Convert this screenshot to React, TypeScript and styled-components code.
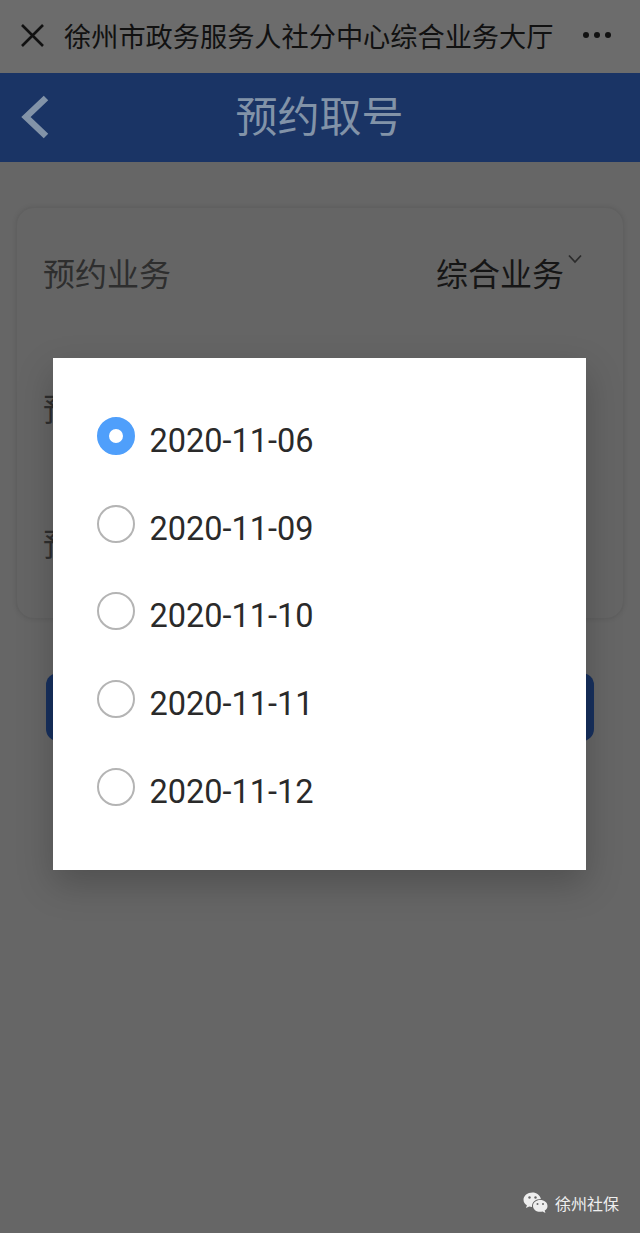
import React from "react";
import styled, { createGlobalStyle } from "styled-components";

const dates = ["2020-11-06", "2020-11-09", "2020-11-10", "2020-11-11", "2020-11-12"];

const GlobalStyle = createGlobalStyle`
  html, body {
    margin: 0;
    padding: 0;
    background: #666666;
  }
  * {
    box-sizing: border-box;
  }
`;

const Page = styled.div`
  position: relative;
  width: 640px;
  height: 1233px;
  overflow: hidden;
  background-color: #666666;
  font-family: "Noto Sans CJK SC", "Noto Sans", sans-serif;
`;

const TitleBar = styled.div`
  height: 73px;
  display: flex;
  align-items: center;
  padding: 0 28px 3px 20px;
  background-color: #6c6c6c;
`;

const TitleText = styled.div`
  flex: 1;
  margin-left: 19px;
  font-size: 27.2px;
  line-height: 36px;
  color: #111111;
  white-space: nowrap;
`;

const Header = styled.div`
  height: 89px;
  display: flex;
  align-items: center;
  position: relative;
  justify-content: center;
  padding-bottom: 8px;
  background-color: #1a3465;
`;

const BackIcon = styled.svg`
  position: absolute;
  left: 20px;
  top: 21px;
`;

const HeaderTitle = styled.div`
  font-size: 42px;
  line-height: 56px;
  color: #8293a8;
  margin-left: -1px;
`;

const Card = styled.div`
  margin: 45px 16px 0;
  height: 412px;
  padding: 0 41px 6px 26px;
  border: 1px solid #606060;
  border-radius: 18px;
  background-color: #656565;
  box-shadow: 0 0 5px rgba(0, 0, 0, 0.1);
`;

const CardRow = styled.div`
  height: 135px;
  display: flex;
  align-items: center;
  justify-content: space-between;
  padding-bottom: 8px;
`;

const RowLabel = styled.div`
  font-size: 32px;
  line-height: 42px;
  color: #2e2e2e;
`;

const RowValue = styled.div`
  display: flex;
  align-items: flex-start;
  font-size: 32px;
  line-height: 42px;
  color: #161616;
`;

const Chevron = styled.svg`
  margin: 3px 0 0 4px;
`;

const SubmitBar = styled.div`
  margin: 54px 46px 0;
  height: 68px;
  border-radius: 12px;
  background-color: #17305e;
`;

const Dialog = styled.div`
  position: absolute;
  left: 53px;
  top: 358px;
  width: 533px;
  height: 512px;
  padding: 34px 0 0 44px;
  background-color: #ffffff;
  box-shadow: 0 14px 34px rgba(0, 0, 0, 0.22);
`;

const DateRow = styled.div`
  height: 87.8px;
  display: flex;
  align-items: center;
  gap: 14.5px;
`;

const Radio = styled.div<{ $checked?: boolean }>`
  width: 38px;
  height: 38px;
  flex: none;
  border-radius: 50%;
  background-color: #ffffff;
  border: ${(p) => (p.$checked ? "12px solid #4f9ffb" : "2px solid #b4b4b4")};
`;

const DateText = styled.div`
  padding-top: 10px;
  font-family: Roboto, "Noto Sans", sans-serif;
  font-size: 32.5px;
  line-height: 42px;
  color: #2a2a2a;
`;

const Watermark = styled.div`
  position: absolute;
  left: 523px;
  top: 1190px;
  display: flex;
  align-items: center;
  gap: 7px;
  font-size: 16px;
  line-height: 26px;
  color: #eeeeee;
`;

export default function App() {
  return (
    <Page>
      <GlobalStyle />
      <TitleBar>
        <svg width="25" height="25" viewBox="0 0 25 25" fill="none">
          <path d="M2 2L23 23M23 2L2 23" stroke="#111" strokeWidth="2.6" />
        </svg>
        <TitleText>徐州市政务服务人社分中心综合业务大厅</TitleText>
        <svg width="30" height="8" viewBox="0 0 30 8" fill="#111">
          <circle cx="4" cy="4" r="3" />
          <circle cx="15" cy="4" r="3" />
          <circle cx="26" cy="4" r="3" />
        </svg>
      </TitleBar>
      <Header>
        <BackIcon width="32" height="46" viewBox="0 0 32 46" fill="none">
          <path d="M26 4L6 23L26 42" stroke="#8293a8" strokeWidth="6.5" />
        </BackIcon>
        <HeaderTitle>预约取号</HeaderTitle>
      </Header>
      <Card>
        <CardRow>
          <RowLabel>预约业务</RowLabel>
          <RowValue>
            综合业务
            <Chevron width="14" height="10" viewBox="0 0 14 10" fill="none">
              <path d="M1 1.5L7 8L13 1.5" stroke="#2c2c2c" strokeWidth="1.8" />
            </Chevron>
          </RowValue>
        </CardRow>
        <CardRow>
          <RowLabel>预约日期</RowLabel>
        </CardRow>
        <CardRow>
          <RowLabel>预约人</RowLabel>
        </CardRow>
      </Card>
      <SubmitBar />
      <Dialog>
        {dates.map((d, i) => (
          <DateRow key={d}>
            <Radio $checked={i === 0} />
            <DateText>{d}</DateText>
          </DateRow>
        ))}
      </Dialog>
      <Watermark>
        <svg width="25" height="22" viewBox="0 0 25 22" fill="#eeeeee">
          <path d="M9.5 0.5C4.5 0.5 0.5 3.7 0.5 7.7C0.5 10 1.8 12 3.9 13.3L3 16L6.2 14.4C7.1 14.7 8 14.8 9 14.9C8.7 10 12.4 7 17.9 6.9C16.9 3.2 13.5 0.5 9.5 0.5Z" />
          <path d="M17.2 8C13.2 8 10 10.6 10 13.9C10 17.2 13.2 19.8 17.2 19.8C18 19.8 18.8 19.7 19.6 19.5L22.4 21L21.7 18.6C23.4 17.5 24.5 15.8 24.5 13.9C24.5 10.6 21.2 8 17.2 8Z" />
          <circle cx="6.5" cy="5.5" r="1.2" fill="#666" />
          <circle cx="12.5" cy="5.5" r="1.2" fill="#666" />
          <circle cx="14.5" cy="12" r="1" fill="#666" />
          <circle cx="20" cy="12" r="1" fill="#666" />
        </svg>
        徐州社保
      </Watermark>
    </Page>
  );
}
